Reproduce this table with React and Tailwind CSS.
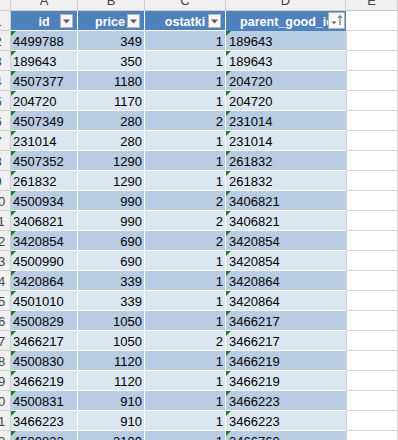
import React from 'react';

const rows = [
  ['4499788', 349, 1, '189643'],
  ['189643', 350, 1, '189643'],
  ['4507377', 1180, 1, '204720'],
  ['204720', 1170, 1, '204720'],
  ['4507349', 280, 2, '231014'],
  ['231014', 280, 1, '231014'],
  ['4507352', 1290, 1, '261832'],
  ['261832', 1290, 1, '261832'],
  ['4500934', 990, 2, '3406821'],
  ['3406821', 990, 2, '3406821'],
  ['3420854', 690, 2, '3420854'],
  ['4500990', 690, 1, '3420854'],
  ['3420864', 339, 1, '3420864'],
  ['4501010', 339, 1, '3420864'],
  ['4500829', 1050, 1, '3466217'],
  ['3466217', 1050, 2, '3466217'],
  ['4500830', 1120, 1, '3466219'],
  ['3466219', 1120, 1, '3466219'],
  ['4500831', 910, 1, '3466223'],
  ['3466223', 910, 1, '3466223'],
  ['4500832', 3100, 1, '3466760'],
];

const FilterBtn = () => (
  <div className="absolute right-[4px] top-[3px] w-[13px] h-[14px] bg-[#f7f7f7] border border-[#b4b4b4] flex items-center justify-center">
    <svg width="7" height="5" viewBox="0 0 7 5">
      <path d="M0 0.5 L7 0.5 L3.5 4.5 Z" fill="#5a5a5a" />
    </svg>
  </div>
);

const SortBtn = () => (
  <div className="absolute right-0 top-[1px] w-[17px] h-[17px] bg-[#f7f7f7] border border-[#b4b4b4]">
    <svg width="15" height="15" viewBox="0 0 15 15">
      <path d="M2.5 8.5 L7.5 8.5 L5 11 Z" fill="#5a5a5a" />
      <path d="M11 3 L11 12 M9 5 L11 2.5 L13 5" stroke="#5a5a5a" strokeWidth="1" fill="none" />
    </svg>
  </div>
);

const Triangle = () => (
  <div className="absolute top-0 left-0 w-0 h-0 border-t-[5px] border-r-[5px] border-t-[#1e7b1e] border-r-transparent" />
);

const RowHead = ({ n }) => (
  <div className="w-[11px] shrink-0 h-full overflow-hidden bg-[#f0f0f0] border-r border-b border-[#cfcfcf] flex items-end">
    <div className="w-[22px] shrink-0 ml-[-13px] text-center leading-[16px] text-[#444]">{n}</div>
  </div>
);

export default function App() {
  return (
    <div className="w-[398px] h-[440px] overflow-hidden bg-white text-[13px] text-black" style={{ fontFamily: '"Liberation Sans", Arial, sans-serif' }}>
      {/* column letters */}
      <div className="flex h-[11px] bg-[#f0f0f0] text-[#444] leading-[16px] overflow-hidden">
        <div className="w-[11px] shrink-0 border-r border-b border-[#cfcfcf]" />
        {[
          ['A', 'w-[67px]'],
          ['B', 'w-[67px]'],
          ['C', 'w-[81px]'],
          ['D', 'w-[120px]'],
          ['E', 'flex-1'],
        ].map(([l, w]) => (
          <div key={l} className={`${w} shrink-0 border-r border-b border-[#cfcfcf] overflow-hidden`}>
            <div className="mt-[-7px] text-center">{l}</div>
          </div>
        ))}
      </div>

      {/* table header */}
      <div className="flex h-[20px] text-[12.5px]">
        <RowHead n={1} />
        <div className="relative w-[67px] shrink-0 bg-[#4f81bd] border-r border-b border-white text-white font-bold flex items-end justify-center leading-[16px] overflow-hidden">
          <span>id</span>
          <FilterBtn />
        </div>
        <div className="relative w-[67px] shrink-0 bg-[#4f81bd] border-r border-b border-white text-white font-bold flex items-end justify-center leading-[16px] overflow-hidden">
          <span className="pr-[2px]">price</span>
          <FilterBtn />
        </div>
        <div className="relative w-[81px] shrink-0 bg-[#4f81bd] border-r border-b border-white text-white font-bold flex items-end justify-center leading-[16px] overflow-hidden">
          <span>ostatki</span>
          <FilterBtn />
        </div>
        <div className="relative w-[120px] shrink-0 bg-[#4f81bd] border-r border-b border-[#4f81bd] text-white font-bold flex items-end justify-center leading-[16px] overflow-hidden whitespace-nowrap">
          <span className="pl-[3px]">parent_good_id</span>
          <SortBtn />
        </div>
        <div className="flex-1 border-b border-r border-[#d4d4d4]" />
      </div>

      {rows.map((r, i) => {
        const bg = i % 2 === 0 ? 'bg-[#b8cce4]' : 'bg-[#dce6f1]';
        return (
          <div key={i} className="flex h-[20px] leading-[16px]">
            <RowHead n={i + 2} />
            <div className={`relative w-[67px] shrink-0 ${bg} border-r border-b border-white flex items-end pl-[2px]`}>
              <Triangle />
              {r[0]}
            </div>
            <div className={`w-[67px] shrink-0 ${bg} border-r border-b border-white flex items-end justify-end pr-[2px]`}>
              {r[1]}
            </div>
            <div className={`w-[81px] shrink-0 ${bg} border-r border-b border-white flex items-end justify-end pr-[2px]`}>
              {r[2]}
            </div>
            <div className={`relative w-[120px] shrink-0 ${bg} border-b border-white flex items-end pl-[3px]`}>
              <Triangle />
              {r[3]}
            </div>
            <div className="flex-1 border-l border-b border-r border-[#d4d4d4]" />
          </div>
        );
      })}
    </div>
  );
}
